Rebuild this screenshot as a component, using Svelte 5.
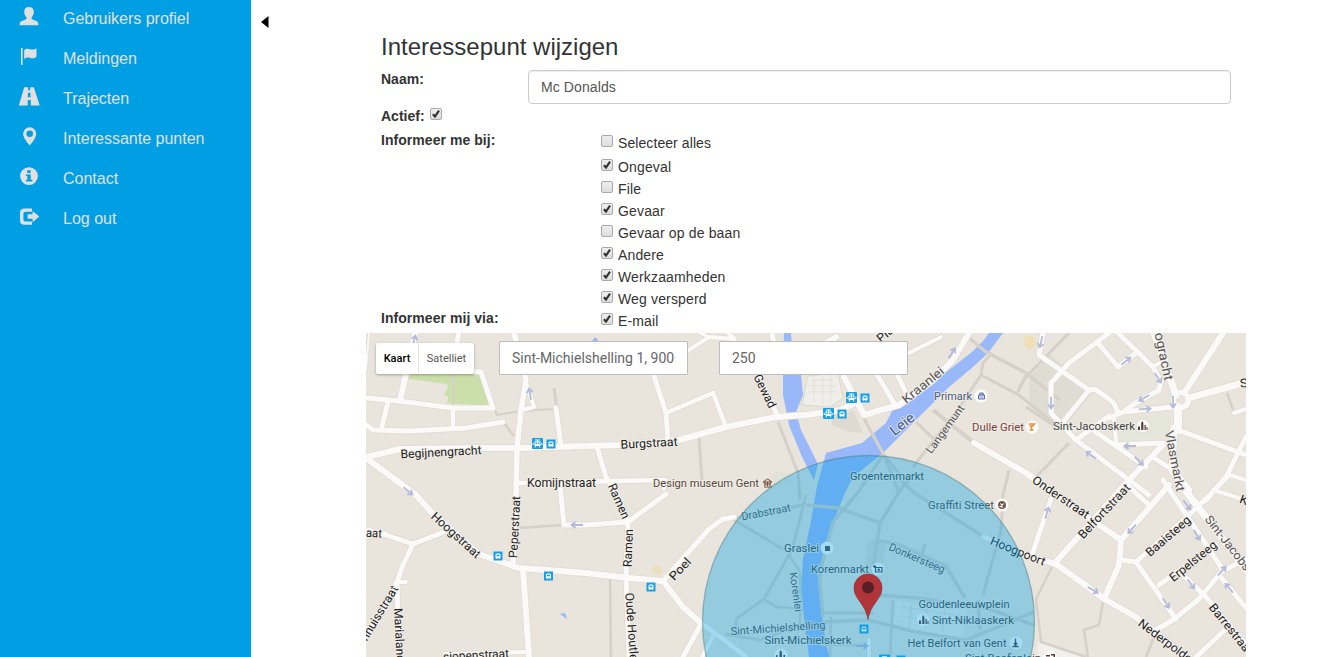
<script>
  const menu = [
    { icon: 'user', label: 'Gebruikers profiel' },
    { icon: 'flag', label: 'Meldingen' },
    { icon: 'road', label: 'Trajecten' },
    { icon: 'pin', label: 'Interessante punten' },
    { icon: 'info', label: 'Contact' },
    { icon: 'logout', label: 'Log out' }
  ];

  let events = $state([
    { label: 'Selecteer alles', on: false },
    { label: 'Ongeval', on: true },
    { label: 'File', on: false },
    { label: 'Gevaar', on: true },
    { label: 'Gevaar op de baan', on: false },
    { label: 'Andere', on: true },
    { label: 'Werkzaamheden', on: true },
    { label: 'Weg versperd', on: true }
  ]);
  let email = $state(true);
  let active = $state(true);

  // Footpaths and lanes: [points, width]
  const paths = [
    ['778,422 798,473 800,500', 3], ['699,438 702,480', 3], ['968,337 986,352 1026,373 1060,400', 3.5],
    ['992,353 983,363 981,375 1019,395 1056,425', 3], ['981,375 959,408 913,467', 3],
    ['1026,375 1018,392', 3], ['933,410 973,442', 4], ['916,422 936,441', 3], ['863,417 884,455 900,475', 3],
    ['1009,470 1003,495 1001,530 983,595', 3], ['1069,333 1026,377 1019,388', 3], ['1069,443 1036,477', 3],
    ['1026,407 1055,426', 3], ['1089,393 1062,426', 3.5], ['1103,602 1099,625 1084,630 1088,657', 2.5],
    ['1156,632 1146,657', 3], ['1053,565 1036,599 1041,642 1086,657', 2.5], ['519,528 563,525', 2.5],
    ['610,579 611,657', 2.5], ['494,408 497,415 521,411 554,409', 2], ['554,388 557,409', 3], ['503,422 514,436', 2.5],
    ['453,372 453,408', 2], ['734,520 783,549', 3], ['736,518 803,505', 3.5],
    ['806,495 794,542 789,555 764,599 736,619 736,635', 3], ['764,599 776,607 803,609', 2.5],
    ['789,555 800,572 800,630', 2.5], ['725,634 760,640 800,625', 3], ['1227,393 1233,410', 2.5],
    ['883,455 859,491 833,522 819,575 823,617', 3.5], ['806,505 839,508 880,523', 3.5],
    ['884,455 899,492 880,523 872,575', 3.5], ['896,475 913,492 940,509 984,537', 3.5],
    ['899,492 912,475', 3.5], ['822,613 873,613', 3], ['822,622 868,620 916,632 966,640 1000,626 1034,612', 3.5],
    ['878,595 916,598 986,608 1034,625', 3.5], ['876,540 900,545 946,566 965,598', 3.5], ['922,554 925,544', 3],
    ['893,600 890,657', 2.5], ['820,645 866,645', 2.5], ['831,617 830,657', 2.5], ['978,600 980,630', 3.5]
  ];

  // Streets: [points, width]
  const roads = [
    ['369,333 366,370', 2], ['415,333 400,401', 6], ['459,333 453,360', 5],
    ['366,398 399,401 453,408 493,408', 5], ['470,371 481,372 493,408', 5], ['388,402 381,430', 5],
    ['453,408 453,428', 4.5], ['366,425 373,430 409,431 466,428 503,422', 5],
    ['366,457 400,449 480,448 517,448 586,446 620,445 679,440 726,427 776,417 806,415 840,410 858,402', 6],
    ['514,333 526,380 521,410 517,448 516,495 513,567', 5.5], ['526,383 534,407 521,410', 4], ['556,408 561,446', 5],
    ['366,458 416,495 433,514 479,554 519,568 586,573 629,578 663,581 683,607 701,623', 6],
    ['701,623 723,639 746,657', 5], ['517,483 664,480', 4.5], ['560,485 564,525 586,525 628,522 666,494', 5],
    ['666,480 664,489', 4], ['653,373 666,413 668,442', 5], ['666,413 713,393 726,427', 4.5],
    ['597,447 606,477 616,492 628,522 626,575 629,657', 5], ['686,352 709,337 735,339 728,333', 4],
    ['700,333 709,337', 3], ['772,333 774,345', 5], ['753,363 778,417', 5],
    ['969,333 953,360 933,380 899,405 864,415 844,377', 6], ['876,373 894,403', 5], ['895,370 906,393', 5],
    ['941,337 909,353', 4], ['974,443 1026,473 1070,505 1121,540', 6], ['836,337 816,349 814,365', 6],
    ['1043,333 1039,355 1089,390', 5], ['1089,390 1095,389 1113,402 1118,412', 5],
    ['1109,333 1069,363 1051,383 1051,413 1076,440 1133,483 1149,495', 5], ['1089,390 1059,427', 5],
    ['1098,343 1118,367 1136,353', 5], ['1118,333 1153,367 1161,382 1159,390 1134,404 1126,410', 5],
    ['1153,367 1166,359', 4], ['1109,418 1123,412 1173,407', 5], ['1154,333 1176,395', 7],
    ['1186,390 1223,333', 6], ['1189,398 1246,382', 7], ['1178,407 1178,430', 8], ['1174,428 1172,470 1189,495', 7],
    ['1178,430 1246,455', 5], ['1246,437 1226,477 1206,500', 5], ['1234,413 1246,409', 4],
    ['1076,440 1109,416', 5], ['1093,430 1146,467', 5], ['1114,417 1116,443', 4], ['1116,445 1163,443', 5],
    ['1163,445 1129,480 1054,564', 6], ['1154,458 1176,472 1190,490', 5], ['1169,485 1121,540 1119,565 1104,599', 6],
    ['1126,484 1149,505', 5], ['1026,555 1056,564 1106,600 1136,617 1186,657', 6], ['1051,499 1033,552', 5],
    ['1163,480 1223,570 1199,599 1173,620 1156,630', 5], ['1180,484 1199,508 1246,570', 7],
    ['1213,492 1189,515 1136,562 1121,560', 5], ['1136,562 1176,619', 5], ['1159,585 1215,545', 5],
    ['1183,575 1206,597 1246,645', 5], ['1219,575 1246,608', 5], ['1223,571 1246,559', 5], ['1226,629 1196,657', 5],
    ['1213,490 1246,500', 4], ['1212,492 1230,475 1246,480', 4], ['383,534 413,544 444,532', 5], ['366,530 385,534', 5],
    ['413,544 403,565 397,582 399,657', 5], ['397,582 366,635', 5], ['397,582 406,582', 4], ['523,569 529,657', 6],
    ['445,654 528,652', 4], ['663,581 709,529 723,519 734,517', 5], ['701,624 683,657', 5], ['714,635 702,657', 4],
    ['984,537 1030,556', 5], ['869,640 869,657', 4]
  ];

  const oneWay = [
    [952, 353, -57], [530, 394, -100], [408, 491, 40], [577, 525, 180], [414, 341, -75], [1041, 342, 103], [1126, 361, -38],
    [1158, 378, 57], [1144, 398, 150], [1145, 409, -4], [1051, 403, 90], [1130, 446, 180], [1139, 461, 45],
    [1091, 455, 215], [1173, 402, 90], [1047, 513, -73], [1187, 505, 52], [1132, 529, 132], [1197, 535, 58],
    [1222, 571, -48], [1229, 588, 230], [1191, 584, 52], [1166, 603, 58], [1093, 590, 30], [862, 646, 0]
  ];

  // Labels: [text, centre x, centre y, angle, drawn length, size, colour]
  const labels = [
    ['Begijnengracht', 441, 452, -3, 81, 12], ['Burgstraat', 649, 443, -3, 57, 12],
    ['Komijnstraat', 561.5, 483, 0, 69, 12], ['Hoogstraat', 456, 535, 42, 62, 12], ['Peperstraat', 514.5, 527, -87, 62, 12],
    ['Ramen', 619, 501, 66, 37, 12], ['Ramen', 628, 548, -88, 38, 12], ['Poel', 680, 569, -47, 26, 12],
    ['Oude Houtlei', 632, 628, 86, 71, 12], ['Marialand', 399.5, 635, 87, 54, 12], ['aat', 374, 533, 4, 16, 12],
    ['nhuisstraat', 379, 613, -59, 62, 12], ['sjopenstraat', 476, 655, -3, 66, 12], ['Gewad', 765, 391, 64, 36, 12],
    ['Kraanlei', 923, 385, -39, 50, 12.5, '#555'], ['Leie', 902, 424, -38, 27, 14, '#3e5790'],
    ['Langemunt', 945, 429, -54, 57, 11, '#555'], ['Plu', 885, 334, -40, 18, 12],
    ['Primark', 953, 396, 0, 38, 11, '#4e5a82'], ['Dulle Griet', 998, 427, 0, 52, 11, '#7a4038'],
    ['Sint-Jacobskerk', 1094, 426, 0, 82, 11, '#444'], ['Design museum Gent', 706, 483, 0, 106, 11, '#5b4840'],
    ['Groentenmarkt', 887, 476, 0, 74, 11, '#444'], ['Graffiti Street', 961, 505, 0, 66, 11, '#4d504e'],
    ['Drabstraat', 766, 512, -11, 50, 11, '#555'], ['Graslei', 801.5, 548, 0, 35, 11, '#444'],
    ['Korenmarkt', 840, 569, 0, 58, 11, '#444'], ['Korenlei', 796, 592, 82, 40, 10.5, '#555'],
    ['Donkersteeg', 917, 558, 23, 60, 11, '#555'], ['Sint-Michielshelling', 778, 628, -4, 95, 11, '#555'],
    ['Sint-Michielskerk', 808, 640, 0, 87, 11, '#444'], ['Goudenleeuwplein', 964, 604, 0, 91, 11, '#444'],
    ['Sint-Niklaaskerk', 973, 620, 0, 82, 11, '#444'], ['Het Belfort van Gent', 957, 643, 0, 99, 11, '#444'],
    ['Sint-Baafsplein', 1003, 658, 0, 76, 11, '#444'], ['Hoogpoort', 1018, 551, 22, 58, 12],
    ['Onderstraat', 1061, 497, 34, 66, 12], ['Belfortstraat', 1104, 511, -47, 70, 12],
    ['Baaisteeg', 1168, 536, -41, 55, 12], ['Erpelsteeg', 1193, 561, -39, 57, 12],
    ['Sint-Jacobs', 1228, 543, 52, 66, 12, '#555'], ['Barrestraat', 1231, 629, 51, 62, 12],
    ['Nederpolder', 1167, 642, 37, 68, 12], ['Ottogracht', 1162, 347, 78, 68, 13, '#555'],
    ['Vlasmarkt', 1175, 461, 79, 62, 12.5, '#555'], ['S', 1244, 383, -8, 8, 12], ['K', 1244, 500, 20, 8, 12]
  ];

  const bigStops = [[537.5, 443.5], [828.5, 413.5], [851.5, 397.5], [884.5, 660]];
  const smallStops = [[551, 444], [498, 556], [548.5, 576], [651, 587], [842, 414], [865, 398], [864, 629], [901, 660]];
</script>

{#snippet box(on)}
  <span class="box" class:on>
    {#if on}
      <svg viewBox="0 0 12 12"><path d="M2.300 6.200 4.800 9 9.600 2" /></svg>
    {/if}
  </span>
{/snippet}

<div class="page">
  <nav>
    {#each menu as item}
      <a href="#{item.icon}">
        <svg class="ico" viewBox="0 0 22 20" aria-hidden="true">
          {#if item.icon === 'user'}
            <path d="M11 0c3 0 4.800 2 4.800 4.800 0 2.400-.9 4.500-2.200 5.600v1.700l5.200 2.200c1.100.5 1.600 1.300 1.700 3.900H1.600c.1-2.600.6-3.400 1.700-3.900l5.200-2.200v-1.700C7.200 9.300 6.200 7.200 6.200 4.800 6.200 2 8 0 11 0z" />
          {:else if item.icon === 'flag'}
            <path d="M3 1h1.600v17H3zM6.200 3.300C9-.1 12 2.800 14.500 2.600c1.600 0 2.700-.7 4-1.100v8.300c-1.600 1.300-3.300 2-6 1.200-2.300-.7-4.300-.6-6.300 1.200z" />
          {:else if item.icon === 'road'}
            <path fill-rule="evenodd" d="M6.200.300h4v2.900h2V.300h3.600L21.700 18.500h-8.900v-5.400H9.700v5.400H.8zM10 5.700l-.2 4.600h2.800l-.3-4.600z" />
          {:else if item.icon === 'pin'}
            <path fill-rule="evenodd" d="M11.700.2a6.600 6.600 0 0 1 6.600 6.600c0 4.500-6.600 11.700-6.600 11.700S5.100 11.300 5.100 6.800A6.600 6.600 0 0 1 11.700.2zm0 3.300a3.300 3.300 0 1 0 0 6.600 3.300 3.300 0 0 0 0-6.600z" />
          {:else if item.icon === 'info'}
            <path fill-rule="evenodd" d="M11 .2a8.900 8.900 0 1 1 0 17.800A8.900 8.900 0 0 1 11 .2zM9.300 3.300V6h3.300V3.300zM8 7.400v1.700h1.400v3.600H8v1.700h6.200v-1.700h-1.500V7.400z" />
          {:else}
            <path d="M14 1.500H6.500Q2 1.500 2 6v7.200Q2 17.700 6.500 17.700H14v-3.200H7.200Q5.400 14.500 5.400 12.700V6.600Q5.400 4.800 7.200 4.800H14z" />
            <path d="M9.600 7.300h5V4l6.700 5.600-6.700 5.600v-3.400h-5z" />
          {/if}
        </svg>
        <span>{item.label}</span>
      </a>
    {/each}
  </nav>

  <main>
    <svg class="collapse" viewBox="0 0 8 12"><path d="M7.500 0v12L0 6z" /></svg>

    <section class="content">
      <div class="form">
        <h3>Interessepunt wijzigen</h3>
        <div class="row name">
          <b>Naam:</b>
          <input type="text" value="Mc Donalds" aria-label="Naam" />
        </div>
        <div class="row active">
          <b>Actief:</b>
          <button class="check" onclick={() => (active = !active)} aria-label="Actief">{@render box(active)}</button>
        </div>
        <div class="row">
          <b class="side">Informeer me bij:</b>
          <div class="options">
            {#each events as ev}
              <button class="check" onclick={() => (ev.on = !ev.on)}>{@render box(ev.on)}<span>{ev.label}</span></button>
            {/each}
          </div>
        </div>
        <div class="row via">
          <b class="side">Informeer mij via:</b>
          <div class="options">
            <button class="check" onclick={() => (email = !email)}>{@render box(email)}<span>E-mail</span></button>
          </div>
        </div>
      </div>

      <div class="map">
        <svg class="tiles" viewBox="366 333 880 324">
          <rect x="366" y="333" width="880" height="324" fill="#e9e5dc" />
          <path d="M411 371h69l9 35-42-3 1-7-4-1 4-8-1-3-38-5z" fill="#cbdfaa" />
          <path d="M1050 354l38 36-32 34-27-20v-26z" fill="#dfdcd4" />
          <path d="M832 415l22-4 9 22-17-2-14-6z" fill="#dedad2" />
          <path d="M1117 418l51-3 6 21-57 4z" fill="#e4e6da" />
          <path d="M1026 335l8 2 3 7-8 6-6-6z" fill="#efe0b5" />
          <circle cx="657" cy="570" r="5" fill="#eadfc0" />
          <path d="M808 376l30-3 5 25-13 9-28-2z" fill="#f0eee8" stroke="#dcd8d0" />
          <path d="M811 380h23M809 386h27M808 392h29M814 376v27M823 376v28M831 374v27" stroke="#e2dfd8" fill="none" />
          <path d="M762 482l14-10 16 2-8 10-15 5z" fill="#e2e3d8" />
          <path d="M1038 642l45 15h-46z" fill="#f2f0ec" />
          <path d="M868 540h18l-6 50h-18z" fill="#dfdcd4" />
          <path d="M897 601l69 9-4 28-69-12z" fill="#eeece6" />
          <path d="M902 607l58 9M900 616l58 8M912 604l-3 24M928 606l-3 24M945 608l-3 24" stroke="#dedbd3" fill="none" />

          <g fill="#99b8fa">
            <path d="M784 333h7l2 28 8 14 2 20-7 17 5 18 8 16 9 18-4 16-12-23-13-32-6-30v-30z" />
            <path d="M989 333h14l-15 20-15 14-24 20-33 33-33 33-30 24-9 18-10 25-8 25-5 35 1 35 4 30 4 12h-21l-4-30-4-38 2-30 8-38 6-35 9-33 36-10 24-20 10-20 13-6 40-27 23-18 12-12z" />
            <path d="M592 342q4-10 7 2z" />
            <path d="M560 614l5-1 2 6-3-2z" />
          </g>

          <g fill="none" stroke="#d5d1c8" stroke-linejoin="round">
            {#each paths as [points, width]}
              <polyline {points} stroke-width={width} />
            {/each}
          </g>
          <g fill="none" stroke="#dedad3" stroke-linejoin="round" stroke-linecap="round">
            {#each roads as [points, width]}
              <polyline {points} stroke-width={width + 1.4} />
            {/each}
            <circle cx="1181" cy="400" r="7.500" stroke-width="7" />
          </g>
          <g fill="none" stroke="#fcfaf9" stroke-linejoin="round" stroke-linecap="round">
            {#each roads as [points, width]}
              <polyline {points} stroke-width={width} />
            {/each}
            <circle cx="1181" cy="400" r="7.500" stroke-width="5.500" />
          </g>
          <g fill="none" stroke="#b3bbdb" stroke-width="1.800">
            {#each oneWay as [x, y, a]}
              <path d="M-6 0H5M1.500-3L5.500 0 1.500 3" transform="translate({x} {y}) rotate({a})" />
            {/each}
          </g>

          <g fill="#fff">
            <circle cx="981" cy="396" r="6.500" /><circle cx="1032" cy="427" r="6.500" /><circle cx="1002" cy="505" r="6.500" />
            <circle cx="1143" cy="426" r="6" /><circle cx="827" cy="548" r="6.500" /><circle cx="878" cy="569" r="6.500" />
            <circle cx="923" cy="620" r="6.500" /><circle cx="1016" cy="643" r="6.500" /><circle cx="781" cy="655" r="6.500" /><circle cx="1050" cy="657" r="6.500" />
          </g>
          <path d="M978.500 395h6v4h-6zM979.800 395v-2h3.400v2" fill="#c3cbe8" stroke="#5a70b0" />
          <path d="M1028.500 424h6l-3 3v3m-2 0h4M1029.500 426h4" fill="none" stroke="#f08a2c" stroke-width="1.400" />
          <path d="M763 482l4.500-3 4.500 3zM764 484h7M764 487h8M765 482v4M767.500 482v4M770 482v4" fill="none" stroke="#7a4a3c" />
          <g fill="#5f3b38">
            <path d="M1138 430v-3l1-1 1 1v3zM1141.200 430v-7l1.100-2 1.100 2v7zM1144.500 430v-5h1.300v5zM1146.500 430v-3h1v3z" />
            <path d="M919 624v-3l1-1 1 1v3zM922.200 624v-7l1.100-2 1.100 2v7zM925.500 624v-5h1.300v5zM927.500 624v-3h1v3z" />
            <path d="M776 660v-5h1.500v5zM779.500 660v-8l1.200-2 1.200 2v8zM783.500 660v-5h1.500v5z" />
            <path d="M1046 655h4v1.500h-4zM1051 654h4v3h-1.500v-1.500H1051z" />
          </g>
          <rect x="825" y="546" width="5" height="5" fill="#534c4c" />
          <path d="M875.500 567.500h6.500v4.500h-6.500zM873 566.500h3M874.500 565v3" fill="none" stroke="#444" stroke-width="1.200" />
          <circle cx="878.700" cy="569.700" r="1.200" fill="#444" />
          <circle cx="1002" cy="505" r="4" fill="#765a51" />
          <path d="M1000 503.500l2 1.500 2-1.500M1002 505v3M999.500 506.500h2" stroke="#fff" fill="none" />
          <path d="M1015.500 638.500v7M1012.500 646.500h6M1014 643l1.500 2 1.500-2" stroke="#444" stroke-width="1.400" fill="none" />

          {#each bigStops as [x, y]}
            <g transform="translate({x} {y})">
              <rect x="-5.500" y="-5.500" width="11" height="11" rx="1" fill="#199fe6" />
              <rect x="-3" y="-2" width="6" height="4.500" fill="#fff" />
              <path d="M-2.500-3.500H2.500M0-3.500v2M-2.500 4l1-2M2.500 4l-1-2M-4.300-.500v2M4.300-.500v2" stroke="#fff" />
              <path d="M-2-.300h1.500M.500-.300H2" stroke="#199fe6" stroke-width="1.500" />
            </g>
          {/each}
          {#each smallStops as [x, y]}
            <g transform="translate({x} {y})">
              <rect x="-4.500" y="-4.500" width="9" height="9" fill="#199fe6" />
              <path d="M-2.500 2V-1.500L-1.500-2.500h3l1 1V2l-1 1-1-.8h-1L-1.500 3z" fill="#fff" />
              <path d="M-1.500-.500H1.500" stroke="#199fe6" stroke-width="1.500" />
            </g>
          {/each}

          <g class="labels">
            {#each labels as [text, x, y, angle, length, size, color]}
              <text
                transform="translate({x} {y}) rotate({angle})"
                y={size * 0.35}
                font-size={size}
                textLength={length}
                lengthAdjust="spacingAndGlyphs"
                fill={color ?? '#222'}>{text}</text>
            {/each}
          </g>

          <circle cx="868.500" cy="621.500" r="166" fill="rgba(0,157,228,.36)" stroke="#4f7f8b" stroke-opacity=".5" stroke-width="1.300" />
          <path d="M868 619.500c-1.500-9-5.500-14-10-20.500-2.500-3.500-4-7-4-11a14 14 0 0 1 28 0c0 4-1.500 7.500-4 11-4.500 6.500-8.500 11.500-10 20.500z" fill="#b03438" stroke="#96272e" stroke-width=".6" />
          <circle cx="868" cy="587.500" r="6" fill="#541f26" />
        </svg>

        <div class="types"><b>Kaart</b><span>Satelliet</span></div>
        <input class="place" type="text" value="Sint-Michielshelling 1, 9000 Gent" aria-label="Adres" />
        <input class="radius" type="text" value="250" aria-label="Straal" />
      </div>
    </section>
  </main>
</div>

<style>
  :global(body) { background: #fff; overflow: hidden; }
  * { box-sizing: border-box; }
  .page {
    display: flex;
    height: 657px;
    overflow: hidden;
    color: #333;
    font: 14px/20px "Liberation Sans", Arial, sans-serif;
  }
  nav { width: 251px; flex: none; background: #009fe3; }
  nav a {
    display: flex;
    height: 40px;
    padding: 7px 0 0 18px;
    color: #e0e0e0;
    font-size: 16px;
    line-height: 23px;
    text-decoration: none;
  }
  .ico { width: 22px; height: 20px; margin-right: 23px; fill: #e0e0e0; }
  main { flex: 1; display: flex; }
  .collapse { width: 8px; height: 12px; margin: 16px 97px 0 10px; flex: none; }
  .content { width: 880px; }
  .form { height: 333px; padding: 0 15px; }
  h3 { margin: 0; height: 70px; padding-top: 33px; font-size: 24px; line-height: 27px; font-weight: 400; }
  .row { display: flex; }
  .name { height: 36px; }
  .name b { width: 147px; line-height: 18px; }
  .name input {
    width: 703px;
    height: 34px;
    padding: 6px 12px;
    border: 1px solid #ccc;
    border-radius: 4px;
    color: #555;
    font: inherit;
    letter-spacing: .1px;
    box-shadow: inset 0 1px 1px rgba(0, 0, 0, .075);
  }
  .active { height: 25px; gap: 5px; }
  .active .check { height: 16px; }
  .active .box { margin-top: 2px; }
  .side { width: 220px; line-height: 18px; letter-spacing: .05px; }
  .options { display: flex; flex-direction: column; align-items: flex-start; }
  .check {
    display: flex;
    height: 22px;
    padding: 0;
    border: 0;
    background: none;
    color: inherit;
    font: inherit;
    line-height: 23px;
    letter-spacing: .15px;
    gap: 5px;
  }
  .options .check:first-child:not(:last-child) { height: 25px; line-height: 25px; letter-spacing: .08px; }
  .options .check:first-child:not(:last-child) .box { margin-top: 4px; }
  .box {
    display: flex;
    width: 12px;
    height: 12px;
    border: 1px solid #aaa;
    border-radius: 2px;
    background: linear-gradient(#ededed, #dedede);
    flex: none;
  }
  .options .box { margin-top: 3px; }
  .box svg { width: 10px; height: 10px; }
  .box path { fill: none; stroke: #333; stroke-width: 2.6; }
  .via .side { line-height: 17px; }
  .map { position: relative; height: 324px; overflow: hidden; font-family: Roboto, sans-serif; }
  .tiles { display: block; width: 880px; height: 324px; }
  .labels {
    font-family: Roboto, sans-serif;
    text-anchor: middle;
    stroke: #f2efe9;
    stroke-opacity: .75;
    stroke-width: 2px;
    paint-order: stroke;
    stroke-linejoin: round;
  }
  .types {
    position: absolute;
    left: 10px;
    top: 10px;
    display: flex;
    width: 98px;
    height: 31px;
    background: #fff;
    border-radius: 2px;
    box-shadow: 0 1px 3px rgba(0, 0, 0, .3);
    font-size: 11px;
    line-height: 31px;
    text-align: center;
  }
  .types b { width: 43px; border-right: 1px solid #e5e5e5; color: #000; font-weight: 500; }
  .types span { flex: 1; color: #565656; }
  .map input {
    position: absolute;
    top: 8px;
    width: 189px;
    height: 34px;
    padding: 6px 12px;
    border: 1px solid #bdbdbd;
    border-radius: 1px;
    background: #fff;
    color: #666;
    font: 14px/20px Roboto, sans-serif;
  }
  .place { left: 133px; }
  .radius { left: 353px; }
</style>
